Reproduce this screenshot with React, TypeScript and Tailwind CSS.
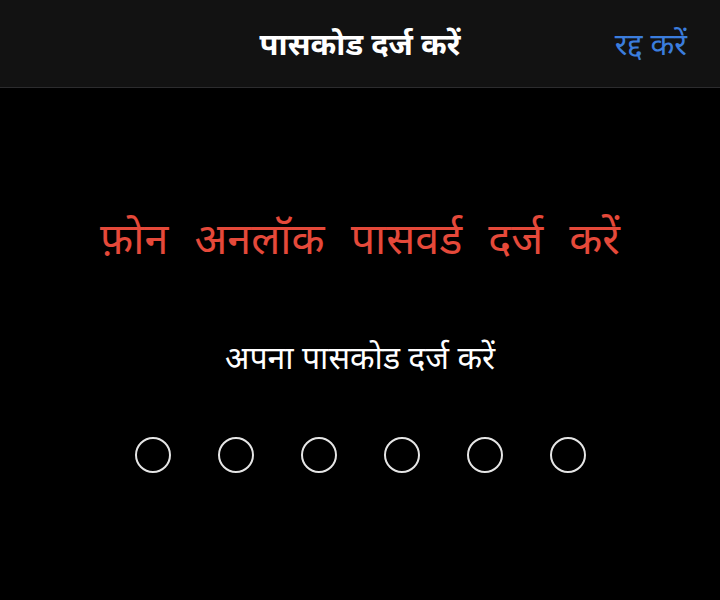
import React from "react";

export default function App() {
  const font = { fontFamily: '"Noto Sans", "Noto Sans Devanagari", sans-serif' };
  return (
    <div className="w-[720px] h-[600px] bg-black flex flex-col" style={font}>
      <div className="h-[88px] bg-[#121212] border-b border-[#2c2c2e] flex items-center relative shrink-0">
        <div className="w-full text-center text-white text-[31px] font-bold leading-none">पासकोड दर्ज करें</div>
        <div className="absolute right-[33px] top-0 h-full flex items-center text-[#3b7ddd] text-[31px] leading-none">रद्द करें</div>
      </div>
      <div className="flex flex-col items-center">
        <div className="mt-[128px] text-[#e5493a] text-[43px] leading-none [word-spacing:15px]">फ़ोन अनलॉक पासवर्ड दर्ज करें</div>
        <div className="mt-[82px] text-white text-[32px] leading-none">अपना पासकोड दर्ज करें</div>
        <div className="mt-[64px] flex gap-[47px]">
          {[0, 1, 2, 3, 4, 5].map((i) => (
            <div key={i} className="w-[36px] h-[36px] rounded-full border-2 border-[#e5e5e5]" />
          ))}
        </div>
      </div>
    </div>
  );
}
